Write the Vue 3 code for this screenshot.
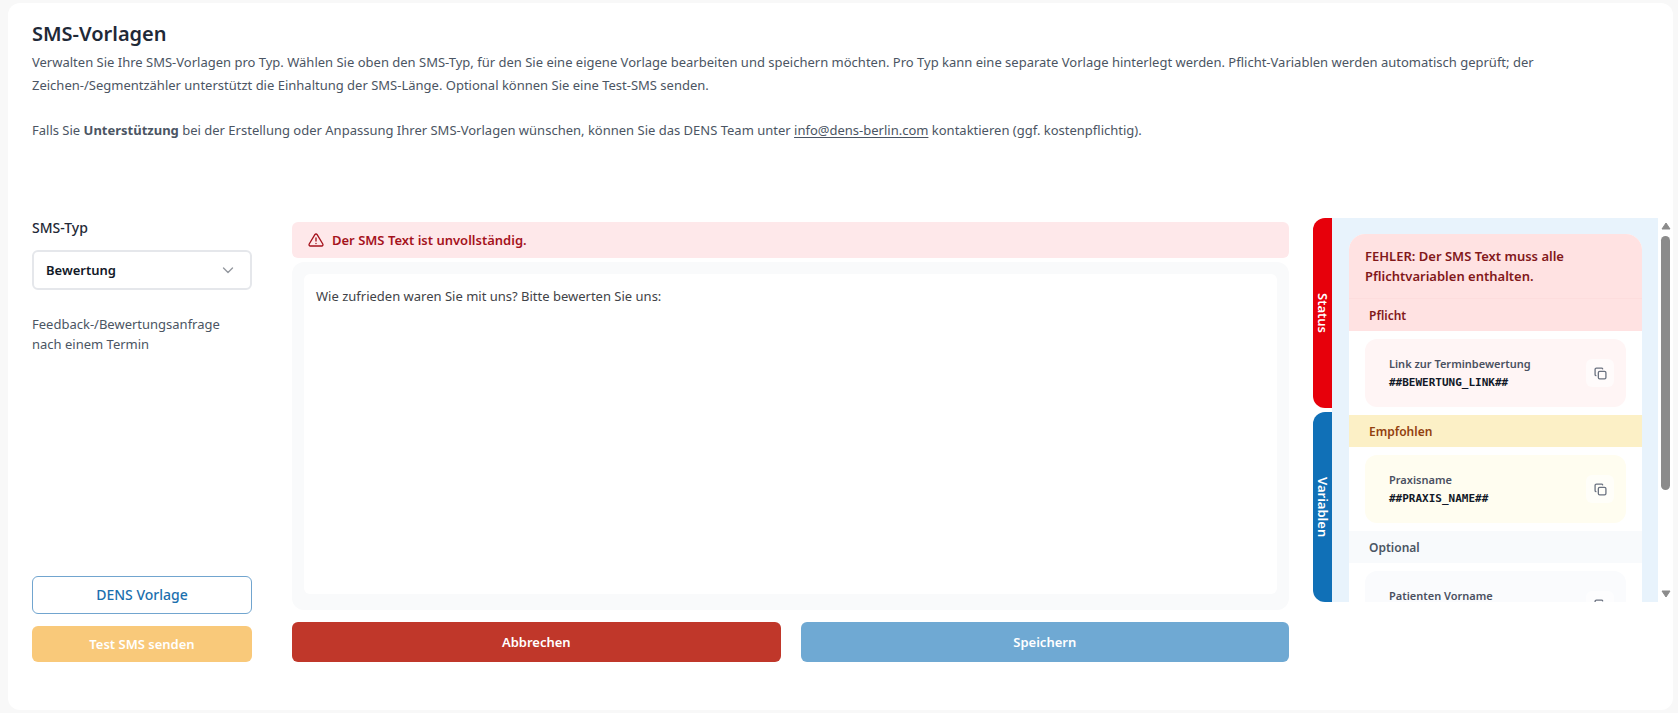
<template>
  <div class="page">
    <main class="card">
      <header class="intro">
        <h1 class="title">SMS-Vorlagen</h1>
        <p class="lead">
          Verwalten Sie Ihre SMS-Vorlagen pro Typ. Wählen Sie oben den SMS-Typ, für den Sie eine eigene Vorlage bearbeiten und speichern möchten. Pro Typ kann eine separate Vorlage hinterlegt werden. Pflicht-Variablen werden automatisch geprüft; der Zeichen-/Segmentzähler unterstützt die Einhaltung der SMS-Länge. Optional können Sie eine Test-SMS senden.
        </p>
        <p class="lead">
          Falls Sie <strong>Unterstützung</strong> bei der Erstellung oder Anpassung Ihrer SMS-Vorlagen wünschen, können Sie das DENS Team unter <a href="mailto:info@dens-berlin.com">info@dens-berlin.com</a> kontaktieren (ggf. kostenpflichtig).
        </p>
      </header>

      <div class="workspace">
        <section class="type-column">
          <label class="type-label" for="sms-type">SMS-Typ</label>
          <div class="select-wrap">
            <select id="sms-type" v-model="smsType" class="type-select">
              <option value="Bewertung">Bewertung</option>
            </select>
            <svg class="chevron" viewBox="0 0 14 14" aria-hidden="true">
              <path d="M2.500 5l4.500 4.500L11.500 5" fill="none" stroke="#94989f" stroke-width="1.4" stroke-linecap="round" stroke-linejoin="round" />
            </svg>
          </div>
          <p class="type-hint">Feedback-/Bewertungsanfrage nach einem Termin</p>
          <div class="type-actions">
            <button type="button" class="btn btn-outline" @click="resetText">DENS Vorlage</button>
            <button type="button" class="btn btn-test" disabled>Test SMS senden</button>
          </div>
        </section>

        <section class="editor-column">
          <div class="alert" role="alert">
            <svg class="alert-icon" viewBox="0 0 24 24" fill="none" stroke="currentColor" stroke-width="2" stroke-linecap="round" stroke-linejoin="round" aria-hidden="true">
              <path d="M10.3 3.9L1.8 18a2 2 0 0 0 1.7 3h17a2 2 0 0 0 1.7-3L13.7 3.9a2 2 0 0 0-3.4 0z" />
              <path d="M12 9v4.500M12 17v.2" />
            </svg>
            Der SMS Text ist unvollständig.
          </div>
          <div class="editor">
            <textarea v-model="text" class="editor-input" aria-label="SMS Text" spellcheck="false"></textarea>
          </div>
          <div class="editor-actions">
            <button type="button" class="btn btn-cancel" @click="resetText">Abbrechen</button>
            <button type="button" class="btn btn-save" disabled>Speichern</button>
          </div>
        </section>

        <aside class="side">
          <div class="tabs">
            <button type="button" class="tab tab-status">Status</button>
            <button type="button" class="tab tab-variables">Variablen</button>
          </div>
          <div class="panel">
            <div class="status-card">
              <p class="status-error">FEHLER: Der SMS Text muss alle Pflichtvariablen enthalten.</p>
              <section v-for="group in groups" :key="group.name" :class="['group', group.kind]">
                <h2 class="group-title">{{ group.name }}</h2>
                <div class="group-body">
                  <div v-for="item in group.items" :key="item.code" class="variable">
                    <div class="variable-text">
                      <span class="variable-label">{{ item.label }}</span>
                      <code class="variable-code">{{ item.code }}</code>
                    </div>
                    <button type="button" class="copy" :aria-label="item.label + ' kopieren'" @click="copy(item.code)">
                      <svg viewBox="0 0 24 24" fill="none" stroke="currentColor" stroke-width="2.4" stroke-linecap="round" stroke-linejoin="round" aria-hidden="true">
                        <rect x="8" y="8" width="14" height="14" rx="2.500" />
                        <path d="M3.500 16A2 2 0 0 1 2 14V4.500A2.500 2.500 0 0 1 4.500 2H14a2 2 0 0 1 2 1.500" />
                      </svg>
                    </button>
                  </div>
                </div>
              </section>
            </div>
          </div>
          <div class="scrollbar" aria-hidden="true">
            <svg class="arrow" viewBox="0 0 10 8"><path d="M5 1l4 6H1z" fill="#8b8b8b" stroke="#8b8b8b" stroke-linejoin="round" /></svg>
            <div class="track"><div class="thumb"></div></div>
            <svg class="arrow" viewBox="0 0 10 8"><path d="M5 7l4-6H1z" fill="#8b8b8b" stroke="#8b8b8b" stroke-linejoin="round" /></svg>
          </div>
        </aside>
      </div>
    </main>
  </div>
</template>

<script setup>
import { ref } from 'vue'

const defaultText = 'Wie zufrieden waren Sie mit uns? Bitte bewerten Sie uns:'

const smsType = ref('Bewertung')
const text = ref(defaultText)

const groups = [
  {
    name: 'Pflicht',
    kind: 'required',
    items: [{ label: 'Link zur Terminbewertung', code: '##BEWERTUNG_LINK##' }]
  },
  {
    name: 'Empfohlen',
    kind: 'recommended',
    items: [{ label: 'Praxisname', code: '##PRAXIS_NAME##' }]
  },
  {
    name: 'Optional',
    kind: 'optional',
    items: [{ label: 'Patienten Vorname', code: '##PATIENT_VORNAME##' }]
  }
]

const resetText = () => {
  text.value = defaultText
}

const copy = (code) => {
  navigator.clipboard?.writeText(code)
}
</script>

<style>
body {
  background: #f8f8f8;
}
</style>

<style scoped>
* {
  box-sizing: border-box;
  margin: 0;
  padding: 0;
}

.page {
  display: flex;
  min-height: 100vh;
  padding: 3px 5px 3px 8px;
  font-family: "Segoe UI", "Noto Sans", sans-serif;
  font-size: 13px;
  line-height: 20px;
  color: #4b5563;
}

button,
select,
textarea {
  font: inherit;
}

.card {
  flex: 1;
  display: flex;
  flex-direction: column;
  min-width: 0;
  padding: 15px 0 48px 24px;
  background: #fff;
  border-radius: 12px;
}

.intro {
  padding-right: 96px;
  margin-bottom: 76px;
}

.title {
  margin-bottom: 1px;
  font-size: 20px;
  font-weight: 600;
  line-height: 32px;
  color: #1f2937;
}

.lead {
  line-height: 23px;
}

.lead + .lead {
  margin-top: 22px;
}

.lead a {
  color: inherit;
  text-underline-offset: 2px;
}

.workspace {
  flex: 1;
  display: grid;
  grid-template-columns: 220px minmax(0, 1fr) 360px;
}

.type-column {
  display: flex;
  flex-direction: column;
}

.type-label {
  margin-bottom: 12px;
  font-size: 14px;
  font-weight: 500;
  color: #1f2937;
}

.select-wrap {
  position: relative;
}

.type-select {
  display: block;
  width: 100%;
  height: 40px;
  padding: 0 36px 0 12px;
  appearance: none;
  background: #fff;
  border: 2px solid #e5e7eb;
  border-radius: 6px;
  font-weight: 600;
  color: #111827;
}

.chevron {
  position: absolute;
  top: 13px;
  right: 17px;
  width: 14px;
  height: 14px;
  pointer-events: none;
}

.type-hint {
  margin-top: 24px;
}

.type-actions {
  display: flex;
  flex-direction: column;
  gap: 12px;
  margin-top: auto;
}

.btn {
  height: 40px;
  border: none;
  border-radius: 6px;
  font-weight: 600;
  color: #fff;
  cursor: pointer;
}

.btn:disabled {
  cursor: not-allowed;
}

.btn-outline {
  height: 38px;
  background: #fff;
  border: 1px solid #71a5cf;
  font-size: 14px;
  font-weight: 500;
  color: #1a6fae;
}

.btn-test {
  height: 36px;
  background: #f9c97a;
}

.editor-column {
  display: flex;
  flex-direction: column;
  padding: 4px 24px 0 40px;
}

.alert {
  display: flex;
  align-items: center;
  gap: 8px;
  height: 36px;
  padding: 0 16px;
  margin-bottom: 4px;
  background: #fee8ea;
  border-radius: 6px;
  font-weight: 600;
  color: #a5121c;
}

.alert-icon {
  width: 16px;
  height: 16px;
}

.editor {
  flex: 1;
  display: flex;
  padding: 12px 12px 16px;
  background: #f9fafb;
  border-radius: 12px;
}

.editor-input {
  flex: 1;
  min-width: 0;
  min-height: 200px;
  padding: 12px;
  background: #fff;
  border: none;
  border-radius: 6px;
  outline: none;
  resize: none;
  color: #3f4347;
}

.editor-actions {
  display: grid;
  grid-template-columns: 1fr 1fr;
  gap: 20px;
  margin-top: 12px;
}

.btn-cancel {
  background: #c0372a;
}

.btn-save {
  background: #6fa9d3;
}

.side {
  display: flex;
  height: 384px;
}

.tabs {
  display: flex;
  flex-direction: column;
  gap: 4px;
  width: 19px;
}

.tab {
  flex: 1;
  display: flex;
  align-items: center;
  justify-content: center;
  writing-mode: vertical-rl;
  border: none;
  border-radius: 12px 0 0 12px;
  font-size: 13px;
  font-weight: 600;
  line-height: 18px;
  color: #fff;
  cursor: pointer;
}

.tab-status {
  background: #e7000b;
}

.tab-variables {
  background: #1070b7;
}

.panel {
  flex: 1;
  min-width: 0;
  padding: 16px 16px 16px 17px;
  overflow-y: auto;
  scrollbar-width: none;
  background: #e8f3fc;
}

.status-card {
  overflow: hidden;
  background: #fff;
  border-radius: 16px;
}

.status-error {
  padding: 12px 16px;
  background: #ffe2e2;
  border-bottom: 1px solid #fddddd;
  font-weight: 600;
  color: #82181a;
}

.group-title {
  padding: 7px 20px 5px;
  font-size: 12px;
  font-weight: 600;
  line-height: 20px;
}

.group-body {
  padding: 8px 16px;
}

.variable {
  display: flex;
  align-items: center;
  justify-content: space-between;
  height: 68px;
  padding: 0 12px 0 24px;
  border-radius: 12px;
}

.variable-text {
  display: flex;
  flex-direction: column;
  padding-top: 2px;
}

.variable-label {
  font-size: 11px;
  font-weight: 600;
  line-height: 18px;
  color: #4a5061;
}

.variable-code {
  font-family: "DejaVu Sans Mono", monospace;
  font-size: 11px;
  font-weight: 700;
  line-height: 20px;
  color: #111827;
}

.copy {
  display: flex;
  align-items: center;
  justify-content: center;
  width: 28px;
  height: 28px;
  background: rgba(255, 255, 255, 0.6);
  border: none;
  border-radius: 6px;
  color: #6b7280;
  cursor: pointer;
}

.copy svg {
  width: 13px;
  height: 13px;
}

.required .group-title {
  background: #ffe2e2;
  color: #82181a;
}

.required .variable {
  background: #fff5f5;
}

.recommended .group-title {
  background: #fcf0c6;
  color: #92400e;
}

.recommended .variable {
  background: #fffdf0;
}

.optional .group-title {
  background: #f8fafc;
  color: #4b5563;
}

.optional .variable {
  background: #fafbfd;
}

.scrollbar {
  display: flex;
  flex-direction: column;
  align-items: center;
  gap: 6px;
  width: 15px;
  padding: 4px 0;
}

.arrow {
  width: 10px;
  height: 8px;
}

.track {
  flex: 1;
  width: 9px;
}

.thumb {
  height: 73%;
  background: #8b8b8b;
  border-radius: 5px;
}
</style>
